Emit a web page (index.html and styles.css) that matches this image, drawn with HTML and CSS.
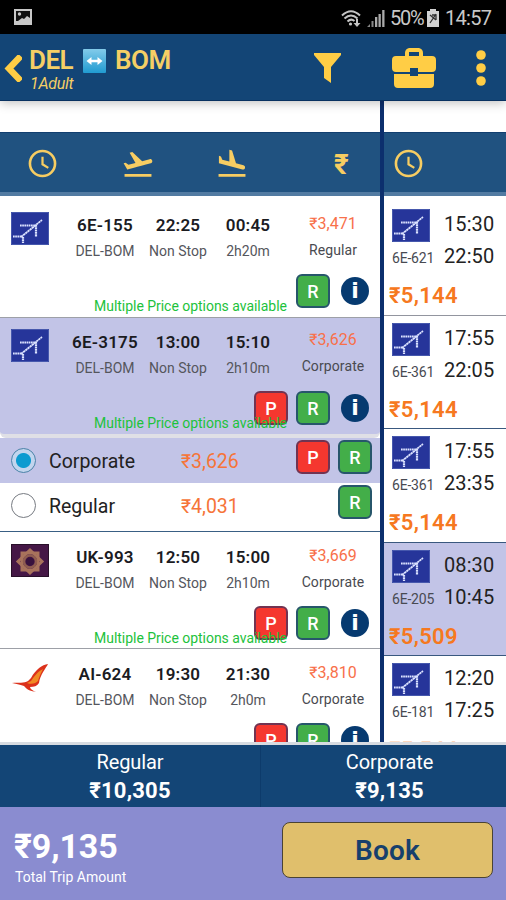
FILE: index.html
```html
<!DOCTYPE html>
<html lang="en">
<head>
<meta charset="utf-8">
<title>DEL - BOM flights</title>
<link rel="stylesheet" href="styles.css">
</head>
<body>
<svg class="defs" aria-hidden="true">
  <symbol id="clock" viewBox="0 0 30 30"><circle cx="15" cy="15" r="13" fill="none" stroke="currentColor" stroke-width="2.7"/><path d="M15 8v7.800l6 3.700" fill="none" stroke="currentColor" stroke-width="2.300"/></symbol>
  <symbol id="takeoff" viewBox="0 0 24 24"><path fill="currentColor" d="M2.500 19h19v2h-19zM22.070 9.640c-.21-.8-1.040-1.280-1.840-1.060L14.920 10l-6.900-6.430-1.930.51 4.140 7.170-4.970 1.330-1.970-1.540-1.450.39 2.590 4.490s7.120-1.900 16.570-4.430c.81-.23 1.280-1.050 1.070-1.850z"/></symbol>
  <symbol id="landing" viewBox="0 0 24 24"><path fill="currentColor" d="M2.500 19h19v2h-19zM19.340 15.850c.8.210 1.620-.26 1.840-1.060.21-.8-.26-1.620-1.060-1.840l-5.310-1.420-2.760-9.020L10.120 2v8.280L5.150 8.950l-.93-2.320-1.450-.39v5.170l16.570 4.440z"/></symbol>
  <symbol id="indigo" viewBox="0 0 38 33"><path fill="#26359a" d="M0 0h38v33H0z"/><path d="M.5.5h37v32H.5z" fill="none" stroke="#4658ad"/><g fill="none" stroke="#dce3ff"><path d="M9 13.500h16M2 24.500h9" stroke-width="2" stroke-dasharray="1.700 .5"/><path d="M10 25L31 8" stroke-width="1.800" stroke-dasharray="2.400 .4"/><path d="M25 13v12M12 25v6" stroke-width="2.200" stroke-dasharray="1.800 .5"/></g></symbol>
  <symbol id="vistara" viewBox="0 0 38 33"><path fill="#451746" d="M0 0h38v33H0z"/><path d="M.5.5h37v32H.5z" fill="none" stroke="#281029"/><g fill="none" stroke="#a8735c" stroke-width="3"><path d="M11 9h16v17H11z"/><path d="M19 6L31 17.500 19 29 7 17.500z"/></g><circle cx="19" cy="17.500" r="6" fill="none" stroke="#8e5c50" stroke-width="2.500"/><circle cx="19" cy="17.500" r="4" fill="#38123d"/></symbol>
  <symbol id="airindia" viewBox="0 0 38 33"><path fill="#dc321c" d="M37 3C31 4 25 8 20 17L17 20C13 22.500 8 21.500 1 22c5 1 9 2 12 3 3 4 7 5 12 6-4-2-6-3-6-5 4 0 7-1 9-4C29 14 35 7 37 3z"/><path fill="#f18a23" d="M32 8c-6 3-9 8-12 12l-4 2c5 2 9 0 11-2 1-4 3-8 5-12z"/></symbol>
</svg>
<div class="app">
  <div class="status">
    <svg class="pic" viewBox="0 0 18 16"><path fill="#c8c8c8" d="M0 0h18v16H0z"/><path fill="#111" d="M2 2h14v7l-3-2-3 3-2-1-4 3H2z"/><circle cx="5.500" cy="5" r="1.700" fill="#c8c8c8"/></svg>
    <div class="status-right">
      <svg class="wifi" viewBox="0 0 22 18"><g fill="none" stroke="#c4c4c4" stroke-width="2"><path d="M1 6.500Q10 -2 19 6.500M3.500 9.500Q10 3.500 16.500 9.500M6.500 12.500Q10 9 13.500 12"/></g><circle cx="9.500" cy="15" r="1.600" fill="#c4c4c4"/><path fill="#c4c4c4" d="M15 10h2v4h2.500L16 18l-3.500-4H15z"/></svg>
      <svg class="signal" viewBox="0 0 18 17"><path fill="#888" d="M0 17l3-3v3zM4.500 11h2v6h-2z"/><path fill="#aaa" d="M8 7h2.300v10H8zM11.500 4h2.300v13h-2.300zM15.200 0h2.300v17h-2.300z"/></svg>
      <span class="pct">50%</span>
      <svg class="batt" viewBox="0 0 12 18"><path fill="#d2d2d2" d="M3 0h6v2h3v16H0V2h3z"/><path fill="none" stroke="#333" stroke-width="1.300" d="M3 6l6 5M9 5L3 14M5 6h4v5"/></svg>
      <span class="time">14:57</span>
    </div>
  </div>
  <header class="header">
    <svg class="back" viewBox="0 0 18 27"><path d="M14.500 3.500L5 13.500l9.500 10" fill="none" stroke="currentColor" stroke-width="6.500" stroke-linecap="square"/></svg>
    <div class="route">
      <div class="route-title"><span>DEL</span><svg class="swap" viewBox="0 0 23 24"><defs><linearGradient id="sky" x2="0" y2="1"><stop stop-color="#83cbea"/><stop offset="1" stop-color="#209bd1"/></linearGradient></defs><rect width="23" height="24" rx="1" fill="url(#sky)"/><path fill="#fff" d="M3.500 12l5-4v2.700h6V8l5 4-5 4v-2.700h-6V16z"/></svg><span>BOM</span></div>
      <div class="pax">1Adult</div>
    </div>
    <svg class="funnel" viewBox="0 0 27 30"><path fill="currentColor" d="M0 0h27v2L17 14v16l-7-5V14L0 2z"/></svg>
    <svg class="case" viewBox="0 0 44 40"><path fill="currentColor" fill-rule="evenodd" d="M13 8V5q0-4 4-5h10q4 1 4 5v3h9q4 0 4 4v8q0 4-4 4H26v-4h-8v4H4q-4 0-4-4v-8q0-4 4-4zM17 8h10V4H17zM2 26h16v2h8v-2h16v10q0 4-4 4H6q-4 0-4-4z"/></svg>
    <svg class="dots" viewBox="0 0 10 36"><g fill="currentColor"><circle cx="5" cy="5" r="4.800"/><circle cx="5" cy="18" r="4.800"/><circle cx="5" cy="31" r="4.800"/></g></svg>
  </header>
  <main class="results">
    <section class="outbound">
      <div class="gap"></div>
      <div class="sort"><svg class="clock"><use href="#clock"/></svg><svg class="plane"><use href="#takeoff"/></svg><svg class="plane"><use href="#landing"/></svg><span class="rupee">₹</span></div>
      <div class="list">
        <article class="flight first">
          <svg class="logo"><use href="#indigo"/></svg>
          <div class="col"><b>6E-155</b><span>DEL-BOM</span></div><div class="col"><b>22:25</b><span>Non Stop</span></div><div class="col"><b>00:45</b><span>2h20m</span></div>
          <div class="fare"><em>₹3,471</em><span>Regular</span></div>
          <div class="tags"><i class="tag r">R</i><i class="info">i</i></div>
          <p class="multi">Multiple Price options available</p>
        </article>
        <article class="flight selected">
          <svg class="logo"><use href="#indigo"/></svg>
          <div class="col"><b>6E-3175</b><span>DEL-BOM</span></div><div class="col"><b>13:00</b><span>Non Stop</span></div><div class="col"><b>15:10</b><span>2h10m</span></div>
          <div class="fare"><em>₹3,626</em><span>Corporate</span></div>
          <div class="tags"><i class="tag p">P</i><i class="tag r">R</i><i class="info">i</i></div>
          <p class="multi">Multiple Price options available</p>
        </article>
        <div class="option chosen"><i class="radio on"></i><span class="name">Corporate</span><span class="cost">₹3,626</span><i class="tag p">P</i><i class="tag r">R</i></div>
        <div class="option"><i class="radio"></i><span class="name">Regular</span><span class="cost">₹4,031</span><i class="tag r">R</i></div>
        <article class="flight">
          <svg class="logo"><use href="#vistara"/></svg>
          <div class="col"><b>UK-993</b><span>DEL-BOM</span></div><div class="col"><b>12:50</b><span>Non Stop</span></div><div class="col"><b>15:00</b><span>2h10m</span></div>
          <div class="fare"><em>₹3,669</em><span>Corporate</span></div>
          <div class="tags"><i class="tag p">P</i><i class="tag r">R</i><i class="info">i</i></div>
          <p class="multi">Multiple Price options available</p>
        </article>
        <article class="flight">
          <svg class="logo"><use href="#airindia"/></svg>
          <div class="col"><b>AI-624</b><span>DEL-BOM</span></div><div class="col"><b>19:30</b><span>Non Stop</span></div><div class="col"><b>21:30</b><span>2h0m</span></div>
          <div class="fare"><em>₹3,810</em><span>Corporate</span></div>
          <div class="tags"><i class="tag p">P</i><i class="tag r">R</i><i class="info">i</i></div>
        </article>
      </div>
    </section>
    <section class="inbound">
      <div class="gap"></div>
      <div class="sort"><svg class="clock"><use href="#clock"/></svg></div>
      <div class="list">
        <article class="leg"><div class="carrier"><svg class="logo"><use href="#indigo"/></svg><span>6E-621</span></div><div class="times"><span>15:30</span><span>22:50</span></div><strong>₹5,144</strong></article>
        <article class="leg"><div class="carrier"><svg class="logo"><use href="#indigo"/></svg><span>6E-361</span></div><div class="times"><span>17:55</span><span>22:05</span></div><strong>₹5,144</strong></article>
        <article class="leg"><div class="carrier"><svg class="logo"><use href="#indigo"/></svg><span>6E-361</span></div><div class="times"><span>17:55</span><span>23:35</span></div><strong>₹5,144</strong></article>
        <article class="leg selected"><div class="carrier"><svg class="logo"><use href="#indigo"/></svg><span>6E-205</span></div><div class="times"><span>08:30</span><span>10:45</span></div><strong>₹5,509</strong></article>
        <article class="leg"><div class="carrier"><svg class="logo"><use href="#indigo"/></svg><span>6E-181</span></div><div class="times"><span>12:20</span><span>17:25</span></div><strong class="faded">₹5,544</strong></article>
      </div>
    </section>
  </main>
  <div class="summary">
    <div><span>Regular</span><b>₹10,305</b></div>
    <div><span>Corporate</span><b>₹9,135</b></div>
  </div>
  <footer class="footer">
    <div class="total"><b>₹9,135</b><span>Total Trip Amount</span></div>
    <button class="book">Book</button>
  </footer>
</div>
</body>
</html>
```
FILE: styles.css
```css
* { box-sizing: border-box; }
body { margin: 0; font-family: Roboto, "Liberation Sans", sans-serif; color: #222; }
svg { display: block; flex: none; }
i, em { font-style: normal; }
.defs { position: absolute; width: 0; height: 0; }
.app { width: 506px; height: 900px; display: flex; flex-direction: column; overflow: hidden; background: #fff; }

.status { height: 34px; flex: none; background: #000; display: flex; justify-content: space-between; padding: 0 15px 0 14px; align-items: center; }
.pic { width: 18px; height: 16px; }
.status-right { display: flex; align-items: center; color: #c8c8c8; font-size: 20px; line-height: 34px; padding-top: 2px; }
.wifi { width: 22px; height: 18px; margin-right: 4px; }
.signal { width: 18px; height: 17px; margin-right: 5px; }
.pct { width: 37px; letter-spacing: -1.3px; }
.batt { width: 12px; height: 18px; margin-right: 6px; }
.time { letter-spacing: -.7px; width: 46px; }

.header { height: 67px; flex: none; background: #134576; border-bottom: 1px solid #083160; color: #ffcd45; display: flex; position: relative; z-index: 1; box-shadow: 0 2px 10px rgba(0,0,0,.25); }
.back { width: 18px; height: 27px; margin: 21px 0 0 4px; }
.route { width: 173px; margin-left: 7px; color: #f5cf65; }
.route-title { display: flex; align-items: center; height: 27px; margin-top: 13px; font-size: 26px; font-weight: 600; line-height: 26px; letter-spacing: -.5px; }
.route-title span { padding-bottom: 1px; }
.route-title span:first-child { width: 54px; }
.swap { width: 23px; height: 24px; margin-right: 9px; }
.pax { font-style: italic; font-size: 16px; line-height: 20px; letter-spacing: -.3px; padding-left: 1px; }
.funnel { width: 27px; height: 30px; margin: 19px 0 0 112px; }
.case { width: 44px; height: 40px; margin: 14px 0 0 51px; }
.dots { width: 10px; height: 36px; margin: 16px 0 0 40px; }

.results { height: 641px; flex: none; display: flex; overflow: hidden; }
.outbound { width: 380px; flex: none; }
.inbound { flex: 1; border-left: 4px solid #0c2f6d; }
.gap { height: 31px; }
.sort { height: 64px; background: #205280; border-top: 1px solid #123f70; border-bottom: 4px solid #527ba2; color: #f7cd62; display: flex; align-items: center; padding: 2px 0 0 28px; }
.outbound .sort { display: grid; grid-template-columns: 95px 94px 112px 24px; }
.inbound .sort { padding-left: 10px; }
.clock { width: 29px; height: 29px; }
.plane { width: 34px; height: 34px; margin-left: -2px; }
.rupee { font-size: 28px; font-weight: 700; line-height: 30px; padding: 2px 0 0 5px; }

.flight { height: 117px; display: grid; grid-template-columns: 64px 82px 64px 76px 94px; grid-template-rows: 70px 46px; border-bottom: 1px solid #9da0a7; }
.flight.first { height: 122px; padding-top: 4px; }
.flight .logo { margin: 12px 0 0 11px; }
.logo { width: 38px; height: 33px; }
.col, .fare { display: flex; flex-direction: column; align-items: center; white-space: nowrap; }
.col b { font-size: 17px; line-height: 22px; margin-top: 14px; font-weight: 600; letter-spacing: .2px; color: #1b1b1f; }
.col span { font-size: 14px; line-height: 18px; margin-top: 6px; color: #55565c; }
.fare em { color: #f8704a; font-size: 16px; line-height: 20px; margin-top: 14px; }
.fare span { font-size: 14px; line-height: 18px; margin-top: 7px; color: #494a50; letter-spacing: .1px; }
.tags { grid-row: 2; grid-column: 1 / -1; display: flex; justify-content: flex-end; align-items: center; height: 34px; margin: 4px 11px 0 0; gap: 8px; }
.tag { width: 34px; height: 34px; border: 2px solid #27566b; border-radius: 6px; color: #fff; background: #43ae49; font-size: 18px; font-weight: 500; line-height: 31px; text-align: center; }
.tag.p { background: #f5372f; border-color: #713452; }
.info { width: 28px; height: 28px; border-radius: 50%; margin-left: 3px; background: #063a70; color: #fff; font: 700 22px/28px "DejaVu Sans", sans-serif; text-align: center; }
.multi { grid-row: 2; grid-column: 1 / -1; align-self: end; margin: 0 0 1px 94px; color: #1dc23c; font-size: 14px; line-height: 18px; letter-spacing: -.03px; white-space: nowrap; }
.flight.selected { background: #c2c4e7; height: 120px; border-bottom: 4px solid #dfdfe6; border-radius: 0 0 6px 6px; grid-template-rows: 69px 47px; }
.flight.selected .logo { margin-top: 11px; }
.flight.selected .col b { margin-top: 13px; }
.flight.selected .fare em { margin-top: 12px; }
.flight.selected .multi { margin-bottom: 2px; }
.option { height: 49px; display: flex; align-items: flex-start; padding: 2px 8px 0 11px; font-size: 19.500px; border-bottom: 1px solid #395f84; }
.option.chosen { height: 45px; padding-top: 2px; background: #c2c4e7; border: 0; }
.radio { width: 25px; height: 25px; border: 1.500px solid #777b82; border-radius: 50%; margin-top: 8px; }
.radio.on { margin-top: 8px; border-color: #4b83a8; background: radial-gradient(circle, #0c9bd0 0 7px, #c2d5ee 8px); }
.name { width: 132px; margin-left: 13px; line-height: 43px; }
.cost { flex: 1; color: #f67438; line-height: 43px; }
.option .tag { margin-left: 8px; }

.leg { height: 113.400px; display: grid; grid-template-columns: 48px 1fr; grid-template-rows: 78px 34px; padding-left: 5px; border-bottom: 1.500px solid #39587f; }
.leg:first-child { height: 120px; padding-top: 6px; border-color: #92959f; }
.leg.selected { background: #c2c4e7; }
.carrier { padding: 7px 0 0 3px; font-size: 14px; line-height: 18px; color: #484a52; letter-spacing: -.2px; }
.carrier span { display: block; margin-top: 7px; white-space: nowrap; }
.times { display: flex; flex-direction: column; font-size: 20px; line-height: 24px; gap: 8px; padding: 10px 0 0 7px; letter-spacing: .1px; }
.leg strong { grid-column: 1 / -1; color: #f67820; font-size: 22px; line-height: 32px; font-weight: 600; letter-spacing: .3px; }
.leg strong.faded { opacity: .3; line-height: 32px; }

.summary { height: 65px; flex: none; background: #134576; border-top: 3px solid #d7dbe1; display: flex; color: #fff; }
.summary div { flex: none; width: 257px; display: flex; flex-direction: column; align-items: center; padding-top: 3px; }
.summary div:first-child { width: 261px; border-right: 1px solid #0d3b6b; }
.summary span { font-size: 20px; line-height: 28px; letter-spacing: -.1px; }
.summary b { font-size: 22px; line-height: 29px; letter-spacing: .2px; }
.footer { flex: 1; background: #8a8cd0; display: flex; justify-content: space-between; padding: 15px 13px 0 14px; color: #fff; }
.total b { display: block; font-size: 34px; line-height: 41px; margin-top: 4px; letter-spacing: -.1px; }
.total span { display: block; font-size: 14px; line-height: 18px; padding: 1px 0 0 1px; }
.book { width: 211px; height: 56px; padding: 0; border: 1.500px solid #4a4334; border-radius: 8px; background: #e0bf6c; color: #17406c; font: 600 28px/56px Roboto, sans-serif; letter-spacing: .2px; }
```
